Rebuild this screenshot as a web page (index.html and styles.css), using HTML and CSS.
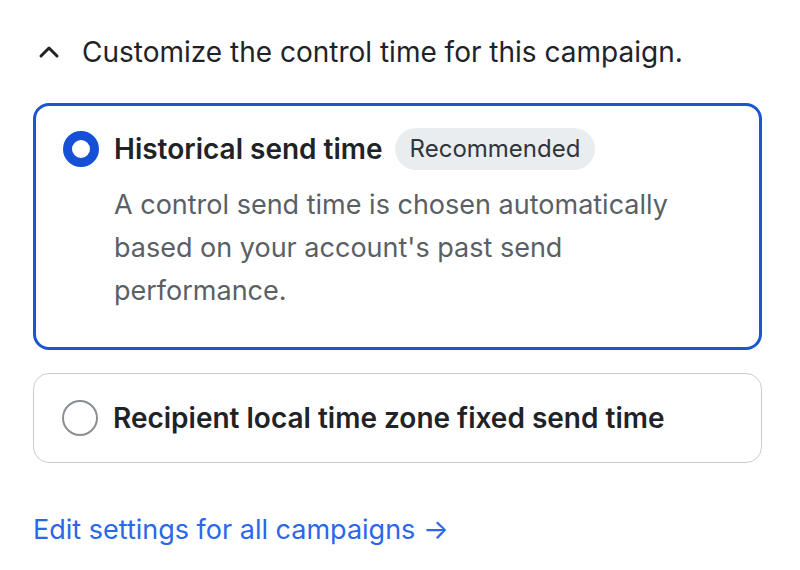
FILE: index.html
```html
<!DOCTYPE html>
<html>
<head>
<meta charset="utf-8">
<link rel="stylesheet" href="styles.css">
</head>
<body>
<div class="panel">
  <div class="header">
    <svg class="chev" width="22" height="14" viewBox="0 0 22 14"><path d="M3 11 L11 3 L19 11" fill="none" stroke="#1f2328" stroke-width="3" stroke-linecap="round" stroke-linejoin="round"/></svg>
    <span class="header-text">Customize the control time for this campaign.</span>
  </div>
  <div class="options">
    <div class="option selected">
      <div class="radio radio-on"></div>
      <div class="option-body">
        <div class="title-row">
          <span class="title">Historical send time</span>
          <span class="badge">Recommended</span>
        </div>
        <p class="desc">A control send time is chosen automatically based on your account's past send performance.</p>
      </div>
    </div>
    <div class="option">
      <div class="radio"></div>
      <div class="option-body">
        <div class="title-row">
          <span class="title">Recipient local time zone fixed send time</span>
        </div>
      </div>
    </div>
  </div>
  <a class="link" href="#">Edit settings for all campaigns →</a>
</div>
</body>
</html>
```
FILE: styles.css
```css
* { box-sizing: border-box; }
body {
  margin: 0;
  background: #ffffff;
  font-family: Inter, "Liberation Sans", Arial, sans-serif;
  color: #1f2328;
}
.panel {
  padding: 30px 38px 0 33px;
  width: 800px;
}
.header {
  display: flex;
  align-items: center;
  gap: 22px;
  padding-left: 5px;
  height: 44px;
}
.chev { flex: none; }
.header-text {
  font-size: 28px;
}
.options {
  margin-top: 29px;
  display: flex;
  flex-direction: column;
  gap: 23px;
}
.option {
  display: flex;
  align-items: flex-start;
  gap: 15px;
  border: 1.5px solid #c9cdd3;
  border-radius: 16px;
  padding: 24px 28px 24px 28px;
}
.option.selected {
  border: 3px solid #1b55d0;
  padding: 23px 28px 35px 27px;
}
.radio {
  flex: none;
  width: 36px;
  height: 36px;
  border-radius: 50%;
  border: 2px solid #8a8f96;
  margin-top: 2px;
}
.radio-on {
  border: 9px solid #1550d6;
}
.option-body { flex: 1; }
.title-row {
  display: flex;
  align-items: center;
  gap: 12px;
  height: 40px;
}
.title {
  font-size: 28px;
  font-weight: 600;
  color: #1f2328;
}
.badge {
  background: #eaedf0;
  border-radius: 22px;
  padding: 0 15px;
  height: 42px;
  line-height: 42px;
  font-size: 24px;
  color: #30353b;
}
.desc {
  margin: 14px 0 0 0;
  font-size: 27px;
  line-height: 43px;
  color: #5a5f66;
}
.link {
  display: inline-block;
  margin-top: 50px;
  font-size: 27px;
  color: #2a68e8;
  text-decoration: none;
}
```
